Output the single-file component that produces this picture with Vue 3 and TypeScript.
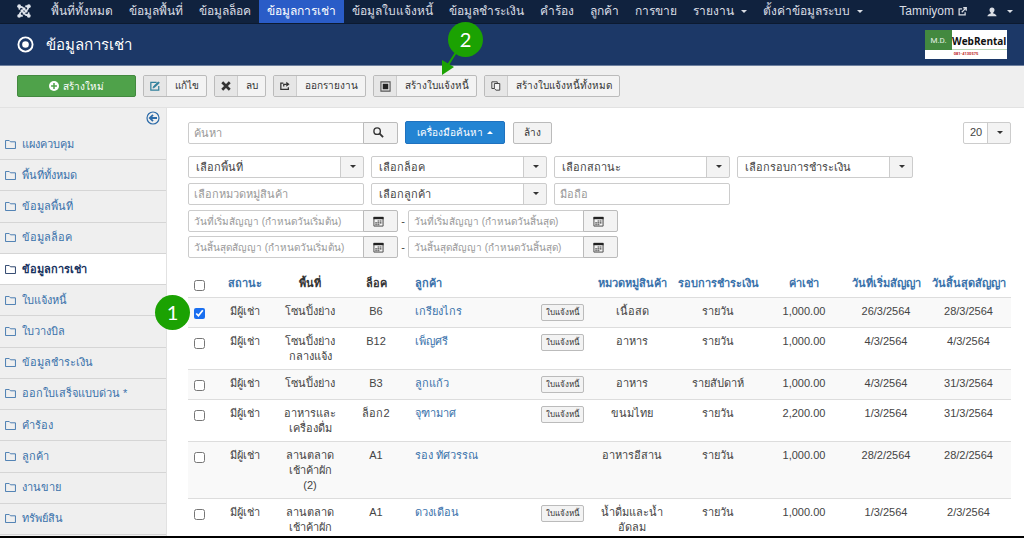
<script setup lang="ts">
import { ref } from 'vue'

interface NavItem { label: string; caret?: boolean; active?: boolean }
interface Contract {
  picked: boolean
  area: string[]
  lock: string
  customer: string
  invoice: boolean
  category: string[]
  cycle: string
  rent: string
  start: string
  end: string
}

const nav: NavItem[] = [
  { label: 'พื้นที่ทั้งหมด' },
  { label: 'ข้อมูลพื้นที่' },
  { label: 'ข้อมูลล็อค' },
  { label: 'ข้อมูลการเช่า', active: true },
  { label: 'ข้อมูลใบแจ้งหนี้' },
  { label: 'ข้อมูลชำระเงิน' },
  { label: 'คำร้อง' },
  { label: 'ลูกค้า' },
  { label: 'การขาย' },
  { label: 'รายงาน', caret: true },
  { label: 'ตั้งค่าข้อมูลระบบ', caret: true },
]

const tools = [
  { icon: 'edit', label: 'แก้ไข' },
  { icon: 'remove', label: 'ลบ' },
  { icon: 'share', label: 'ออกรายงาน' },
  { icon: 'box', label: 'สร้างใบแจ้งหนี้' },
  { icon: 'copy', label: 'สร้างใบแจ้งหนี้ทั้งหมด' },
]

const side = [
  'แผงควบคุม', 'พื้นที่ทั้งหมด', 'ข้อมูลพื้นที่', 'ข้อมูลล็อค', 'ข้อมูลการเช่า', 'ใบแจ้งหนี้',
  'ใบวางบิล', 'ข้อมูลชำระเงิน', 'ออกใบเสร็จแบบด่วน *', 'คำร้อง', 'ลูกค้า', 'งานขาย', 'ทรัพย์สิน',
]
const current = 'ข้อมูลการเช่า'

const dateRows = [
  ['วันที่เริ่มสัญญา (กำหนดวันเริ่มต้น)', 'วันที่เริ่มสัญญา (กำหนดวันสิ้นสุด)'],
  ['วันสิ้นสุดสัญญา (กำหนดวันเริ่มต้น)', 'วันสิ้นสุดสัญญา (กำหนดวันสิ้นสุด)'],
]

const rows = ref<Contract[]>([
  { picked: true, area: ['โซนปิ้งย่าง'], lock: 'B6', customer: 'เกรียงไกร', invoice: true, category: ['เนื้อสด'], cycle: 'รายวัน', rent: '1,000.00', start: '26/3/2564', end: '28/3/2564' },
  { picked: false, area: ['โซนปิ้งย่าง', 'กลางแจ้ง'], lock: 'B12', customer: 'เพ็ญศรี', invoice: true, category: ['อาหาร'], cycle: 'รายวัน', rent: '1,000.00', start: '4/3/2564', end: '4/3/2564' },
  { picked: false, area: ['โซนปิ้งย่าง'], lock: 'B3', customer: 'ลูกแก้ว', invoice: true, category: ['อาหาร'], cycle: 'รายสัปดาห์', rent: '1,000.00', start: '4/3/2564', end: '31/3/2564' },
  { picked: false, area: ['อาหารและ', 'เครื่องดื่ม'], lock: 'ล็อก2', customer: 'จุฑามาศ', invoice: true, category: ['ขนมไทย'], cycle: 'รายวัน', rent: '2,200.00', start: '1/3/2564', end: '31/3/2564' },
  { picked: false, area: ['ลานตลาด', 'เช้าค้าผัก', '(2)'], lock: 'A1', customer: 'รอง ทัศวรรณ', invoice: false, category: ['อาหารอีสาน'], cycle: 'รายวัน', rent: '1,000.00', start: '28/2/2564', end: '28/2/2564' },
  { picked: false, area: ['ลานตลาด', 'เช้าค้าผัก'], lock: 'A1', customer: 'ดวงเดือน', invoice: true, category: ['น้ำดื่มและน้ำ', 'อัดลม'], cycle: 'รายวัน', rent: '1,000.00', start: '1/3/2564', end: '2/3/2564' },
])
</script>

<template>
  <div class="app">
    <nav class="topbar">
      <a class="brand" href="#" aria-label="Joomla">
        <svg viewBox="0 0 16 16" width="14" height="14" fill="none" stroke="#dfe4ec" stroke-width="2">
          <path d="M3 6.500C1.600 4 4.300 2.200 6.300 4L11.500 9.200M9.500 3C12 1.600 13.800 4.300 12 6.300L6.800 11.500M13 9.500C14.400 12 11.700 13.800 9.700 12L4.500 6.800M6.500 13C4 14.400 2.200 11.700 4 9.700L9.200 4.500" />
          <g fill="#dfe4ec" stroke="none"><circle cx="2.500" cy="2.500" r="2.200" /><circle cx="13.500" cy="2.500" r="2.200" /><circle cx="2.500" cy="13.500" r="2.200" /><circle cx="13.500" cy="13.500" r="2.200" /></g>
        </svg>
      </a>
      <a v-for="n in nav" :key="n.label" href="#" class="nav-link" :class="{ active: n.active }">
        {{ n.label }}<i v-if="n.caret" class="caret"></i>
      </a>
      <span class="spacer"></span>
      <a href="#" class="nav-link site">Tamniyom
        <svg viewBox="0 0 12 12" width="9" height="9" fill="none" stroke="currentColor" stroke-width="1.700"><path d="M5.500 2.500H1.500v8h8V7M5 7l5.500-5.500M7 1h4v4" /></svg>
      </a>
      <a href="#" class="nav-link user" aria-label="User menu">
        <svg viewBox="0 0 12 12" width="10" height="10" fill="currentColor"><path d="M6 .5c2 0 3 1.300 3 3 0 1.500-.7 2.500-1.500 3v1.200c1.800.5 4 1.200 4 3.300H.5C.5 8.900 2.700 8.200 4.500 7.700V6.500C3.700 6 3 5 3 3.500c0-1.700 1-3 3-3z" /></svg>
        <i class="caret"></i>
      </a>
    </nav>

    <header class="titlebar">
      <svg class="target" viewBox="0 0 18 18" width="17" height="17"><circle cx="9" cy="9" r="7.500" fill="none" stroke="#fff" stroke-width="2" /><circle cx="9" cy="9" r="3.500" fill="#fff" /></svg>
      <h1>ข้อมูลการเช่า</h1>
      <div class="logo">
        <span class="logo-md">M.D.</span>
        <span class="logo-name">WebRental</span>
        <span class="logo-tel">081-4130575</span>
      </div>
    </header>

    <div class="toolbar">
      <button type="button" class="new">
        <svg viewBox="0 0 12 12" width="10" height="10"><circle cx="6" cy="6" r="6" fill="#fff" /><path d="M6 2.500v7M2.500 6h7" stroke="#4fa24a" stroke-width="1.800" /></svg>
        สร้างใหม่
      </button>
      <div v-for="t in tools" :key="t.icon" class="tool-wrap">
        <button type="button" class="tool">
          <span class="tool-icon">
            <svg v-if="t.icon === 'edit'" viewBox="0 0 12 12" width="10" height="10" fill="none" stroke="#31809c" stroke-width="1.500"><path d="M8 1.500H1v9.500h9.500V6" /><path d="M3.500 8.500l1-2.500 5.500-5 1.300 1.300-5.500 5.200z" fill="#31809c" stroke-width=".8" /></svg>
            <svg v-else-if="t.icon === 'remove'" viewBox="0 0 12 12" width="10" height="10" stroke="#333" stroke-width="3.200"><path d="M1.500 1.500l9 9M10.500 1.500l-9 9" /></svg>
            <svg v-else-if="t.icon === 'share'" viewBox="0 0 12 12" width="10" height="10" fill="none" stroke="#333" stroke-width="1.500"><path d="M4 2.500H1V10h9V7.500M4.500 6.500V4H8" /><path d="M7.500 1l4 3-4 3z" fill="#333" stroke="none" /></svg>
            <svg v-else-if="t.icon === 'box'" viewBox="0 0 12 12" width="11" height="11"><path d="M1 1h10v10H1z" fill="none" stroke="#555" stroke-width="1.200" /><path d="M3 3h6v6H3z" fill="#222" /></svg>
            <svg v-else viewBox="0 0 12 12" width="10" height="10" fill="#f3f3f3" stroke="#444" stroke-width="1.200"><path d="M1 1h6.500v8H1z" /><path d="M4 3h6.500v8H6L4 9z" /></svg>
          </span>
          <span class="tool-text">{{ t.label }}</span>
        </button>
        <template v-if="t.icon === 'box'">
          <svg class="arrow" viewBox="0 0 24 30" width="24" height="30"><path d="M19 0L7 19" stroke="#1ba202" stroke-width="2" /><path d="M1 29L1 14l12 7z" fill="#1ba202" /></svg>
          <span class="step step-two">2</span>
        </template>
      </div>
    </div>

    <div class="body">
      <aside class="sidebar">
        <button type="button" class="collapse" aria-label="Hide sidebar">
          <svg viewBox="0 0 14 14" width="14" height="14" fill="none" stroke="#2d6ba8"><circle cx="7" cy="7" r="6" stroke-width="1.200" /><path d="M11 7H4M7 3.800L3.800 7 7 10.200" stroke-width="1.800" /></svg>
        </button>
        <a v-for="s in side" :key="s" href="#" class="side-link" :class="{ on: s === current }">
          <svg viewBox="0 0 12 10" width="11" height="9" fill="none" stroke="currentColor"><path d="M.5 9.500v-9h4l1.500 1.500h5.500v7.500z" /></svg>
          {{ s }}
        </a>
      </aside>

      <main class="main">
        <div class="search-row">
          <div class="group">
            <input type="text" placeholder="ค้นหา" aria-label="ค้นหา" />
            <button type="button" aria-label="ค้นหา">
              <svg viewBox="0 0 12 12" width="11" height="11" fill="none" stroke="#333"><circle cx="4.500" cy="4.500" r="3.500" stroke-width="1.500" /><path d="M7 7l4 4" stroke-width="2" /></svg>
            </button>
          </div>
          <button type="button" class="primary">เครื่องมือค้นหา<i class="caret up"></i></button>
          <button type="button" class="clear">ล้าง</button>
          <div class="pick limit"><select aria-label="จำนวนรายการ"><option>20</option></select></div>
        </div>

        <div class="filters">
          <div class="pick"><select aria-label="พื้นที่"><option>เลือกพื้นที่</option></select></div>
          <div class="pick"><select aria-label="ล็อค"><option>เลือกล็อค</option></select></div>
          <div class="pick"><select aria-label="สถานะ"><option>เลือกสถานะ</option></select></div>
          <div class="pick"><select aria-label="รอบการชำระเงิน"><option>เลือกรอบการชำระเงิน</option></select></div>
          <input type="text" placeholder="เลือกหมวดหมู่สินค้า" aria-label="หมวดหมู่สินค้า" />
          <div class="pick"><select aria-label="ลูกค้า"><option>เลือกลูกค้า</option></select></div>
          <input type="text" placeholder="มือถือ" aria-label="มือถือ" />
        </div>

        <div v-for="(pair, i) in dateRows" :key="i" class="date-row">
          <template v-for="(d, j) in pair" :key="d">
            <span v-if="j" class="dash">-</span>
            <div class="group">
              <input type="text" :placeholder="d" :aria-label="d" />
              <button type="button" aria-label="ปฏิทิน">
                <svg viewBox="0 0 12 12" width="11" height="11"><path d="M1 1.500h10v9.500H1z" fill="none" stroke="#444" /><path d="M.5 1h11v2.500H.5z" fill="#222" /><path d="M5 5.500h5M2.500 7.500H10M2.500 9.500h5" stroke="#444" stroke-width="1.200" stroke-dasharray="1.700 .6" /></svg>
              </button>
            </div>
          </template>
        </div>

        <table class="grid">
          <colgroup>
            <col class="c-check" /><col class="c-status" /><col class="c-area" /><col class="c-lock" /><col class="c-cust" /><col class="c-inv" />
            <col class="c-cat" /><col class="c-cycle" /><col class="c-rent" /><col class="c-start" /><col class="c-end" />
          </colgroup>
          <thead>
            <tr>
              <th><input type="checkbox" aria-label="เลือกทั้งหมด" /></th>
              <th><a href="#">สถานะ</a></th>
              <th>พื้นที่</th>
              <th>ล็อค</th>
              <th class="left" colspan="2"><a href="#">ลูกค้า</a></th>
              <th><a href="#">หมวดหมู่สินค้า</a></th>
              <th><a href="#">รอบการชำระเงิน</a></th>
              <th><a href="#">ค่าเช่า</a></th>
              <th><a href="#">วันที่เริ่มสัญญา</a></th>
              <th><a href="#">วันสิ้นสุดสัญญา</a></th>
            </tr>
          </thead>
          <tbody>
            <tr v-for="(r, i) in rows" :key="i">
              <td class="check">
                <input v-model="r.picked" type="checkbox" :aria-label="r.customer" />
                <span v-if="i === 0" class="step step-one">1</span>
              </td>
              <td>มีผู้เช่า</td>
              <td><div v-for="a in r.area" :key="a">{{ a }}</div></td>
              <td>{{ r.lock }}</td>
              <td class="left"><a href="#">{{ r.customer }}</a></td>
              <td class="left"><button v-if="r.invoice" type="button" class="mini">ใบแจ้งหนี้</button></td>
              <td><div v-for="c in r.category" :key="c">{{ c }}</div></td>
              <td>{{ r.cycle }}</td>
              <td>{{ r.rent }}</td>
              <td>{{ r.start }}</td>
              <td>{{ r.end }}</td>
            </tr>
          </tbody>
        </table>
      </main>
    </div>
  </div>
</template>

<style>
body { margin: 0; background: #fff; }
</style>

<style scoped>
* { box-sizing: border-box; }
.app {
  height: 100vh;
  display: flex;
  flex-direction: column;
  overflow: hidden;
  border-bottom: 2px solid #000;
  font: 11px/15px "Liberation Sans", Arial, sans-serif;
  color: #444;
}
a { color: #3a72ab; text-decoration: none; }
button, input, select { font: inherit; color: inherit; margin: 0; }
svg { flex: none; }

.topbar { display: flex; flex: none; height: 24px; padding: 0 3px 0 17px; background: #10223e; border-bottom: 1px solid #0c1a30; }
.brand { display: flex; align-items: center; width: 26px; padding-bottom: 1px; }
.nav-link { display: flex; align-items: center; padding: 0 8px; font-size: 12px; color: #d9dde4; white-space: nowrap; }
.nav-link.active { background: #2a5cc7; color: #fff; }
.spacer { flex: 1; }
.site { gap: 4px; }
.user { gap: 10px; padding-left: 12px; }
.caret { margin-left: 7px; border: 3px solid transparent; border-top-color: currentColor; border-bottom: 0; }
.user .caret { margin-left: 0; }
.caret.up { margin-left: 4px; border-top: 0; border-bottom: 3px solid currentColor; }

.titlebar { display: flex; flex: none; align-items: center; height: 42px; padding: 0 17px; background: #1c3867; border-bottom: 1px solid #6d7f9e; }
h1 { flex: 1; margin: 0 0 0 12px; font-size: 15px; line-height: 24px; font-weight: 400; color: #fff; }
.logo { display: grid; grid-template-columns: 27px 1fr; grid-template-rows: 20px 9px; width: 82px; background: #fff; font-family: Roboto, sans-serif; }
.logo-md { background: #43893f; color: #e5f0e4; font-size: 8px; line-height: 21px; text-align: center; }
.logo-name { font-family: "Open Sans", sans-serif; font-size: 10px; line-height: 22px; font-weight: 700; color: #111; border-bottom: 1px solid #b9d6b7; }
.logo-tel { grid-column: 1 / 3; font-size: 4px; line-height: 7px; font-weight: 700; text-align: center; color: #b22; }

.toolbar { display: flex; flex: none; gap: 7px; height: 42px; padding: 9px 17px 0; background: #efefef; border-bottom: 1px solid #e2e2e2; font-size: 10px; }
.new { display: flex; align-items: center; justify-content: center; gap: 4px; width: 119px; height: 22px; border: 1px solid #43893f; border-radius: 2px; background: #4fa24a; color: #fff; padding: 0; }
.tool-wrap { position: relative; }
.tool { display: flex; height: 22px; padding: 0; border: 1px solid #bbb; border-radius: 2px; background: #f3f3f3; color: #333; overflow: hidden; }
.tool-icon { display: flex; align-items: center; justify-content: center; width: 23px; height: 20px; background: #e6e6e6; border-right: 1px solid #ccc; }
.tool-text { padding: 0 7px 0 8px; line-height: 20px; white-space: nowrap; }
.step { position: absolute; z-index: 2; width: 35px; height: 35px; border-radius: 50%; background: #1ba202; color: #fff; font: 20px/35px Lato, sans-serif; text-align: center; }
.step-two { left: 75px; top: -53px; }
.arrow { position: absolute; z-index: 2; left: 68px; top: -29px; }
.step-one { right: 21px; top: -3px; }

.body { display: flex; flex: 1; min-height: 0; align-items: stretch; }
.sidebar { display: flex; flex-direction: column; flex: none; width: 167px; padding-bottom: 1px; background: #efefef; border-right: 1px solid #e2e2e2; }
.collapse { display: flex; margin: 3px 6px 4px auto; padding: 0; border: 0; background: none; }
.side-link { display: flex; flex: 1 0 31px; align-items: center; gap: 6px; padding-left: 5px; border-bottom: 1px solid #d5d5d5; white-space: nowrap; }
.side-link.on { background: #fff; color: #17325e; font-weight: 700; }

.main { flex: 1; min-width: 0; padding: 13px 13px 0 21px; }
.search-row { display: flex; align-items: center; }
.main input[type="text"] { width: 176px; height: 22px; padding: 0 5px; border: 1px solid #ccc; border-radius: 2px; background: #fff; outline: 0; }
.main input::placeholder { color: #999; opacity: 1; }
.group { display: flex; }
.main .group input[type="text"] { border-radius: 2px 0 0 2px; }
.main .date-row input[type="text"] { font-size: 10px; }
.group button { display: flex; align-items: center; justify-content: center; width: 35px; height: 22px; margin-left: -1px; padding: 0 4px 0 0; border: 1px solid #bbb; border-radius: 0 2px 2px 0; background: #f3f3f3; }
.primary { display: flex; align-items: center; height: 23px; margin-left: 7px; padding: 0 11px; border: 1px solid #1f72bf; border-radius: 2px; background: #2384d3; color: #fff; font-size: 10px; }
.clear { height: 22px; margin-left: 8px; padding: 0 10px; border: 1px solid #bbb; border-radius: 2px; background: #f3f3f3; color: #333; font-size: 10px; }
.pick { position: relative; width: 176px; height: 22px; border: 1px solid #ccc; border-radius: 2px; background: linear-gradient(#f3f3f3, #f3f3f3) right / 22px 100% no-repeat #fff; }
.pick::after { content: ""; position: absolute; right: 7px; top: 8px; border: 3px solid transparent; border-top-color: #333; border-bottom: 0; pointer-events: none; }
.pick::before { content: ""; position: absolute; right: 22px; top: 0; bottom: 0; border-left: 1px solid #ccc; }
.pick select { display: block; width: 100%; height: 20px; padding: 0 24px 0 7px; border: 0; background: none; appearance: none; outline: 0; }
.limit { width: 48px; margin-left: auto; }
.limit select { padding-left: 6px; }
.filters { display: grid; grid-template-columns: repeat(4, 176px); gap: 5px 7px; margin: 12px 0 5px; }
.date-row { display: flex; margin-bottom: 4px; }
.dash { width: 10px; line-height: 22px; text-align: center; }

.grid { width: 100%; margin-top: 14px; table-layout: fixed; border-collapse: separate; border-spacing: 0; }
.c-check { width: 23px; } .c-status { width: 67px; } .c-area { width: 64px; } .c-lock { width: 68px; }
.c-cust { width: 126px; } .c-inv { width: 54px; } .c-cat { width: 84px; } .c-cycle { width: 88px; }
.c-rent { width: 84px; } .c-start { width: 80px; } .c-end { width: 85px; }
th { padding: 0 0 6px; height: 25px; vertical-align: bottom; font-weight: 700; color: #333; white-space: nowrap; }
td { padding: 6px 0 5px; border-top: 1px solid #ddd; vertical-align: top; text-align: center; white-space: nowrap; }
tbody tr:nth-child(odd) td { background: #f9f9f9; }
th.left, td.left { padding-left: 5px; text-align: left; }
.check { position: relative; }
.grid input { display: block; width: 11px; height: 11px; margin: 4px auto 0; accent-color: #1a6ff0; }
.grid th input { margin: 0 auto; }
.mini { display: block; height: 17px; margin-bottom: 1px; padding: 0 4px; border: 1px solid #bbb; border-radius: 2px; background: #f3f3f3; color: #333; font-size: 8px; line-height: 14px; }
</style>
